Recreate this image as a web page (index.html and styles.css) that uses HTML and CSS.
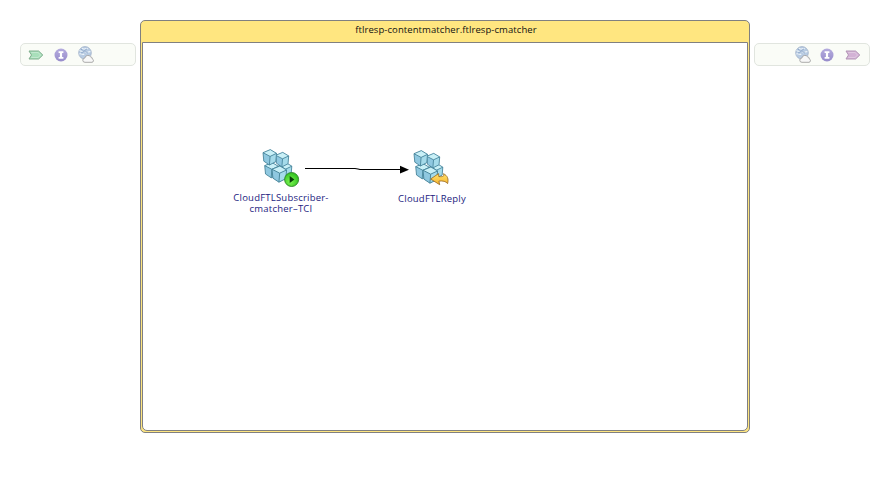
FILE: index.html
```
<!DOCTYPE html>
<html lang="en">
<head>
<meta charset="utf-8">
<title>ftlresp-cmatcher</title>
<link rel="stylesheet" href="styles.css">
</head>
<body>
<svg class="defs" width="0" height="0" aria-hidden="true">
  <defs>
    <linearGradient id="purple" x1="0" y1="0" x2="0" y2="1"><stop offset="0" stop-color="#b5acde"/><stop offset="1" stop-color="#978ccb"/></linearGradient>
    <radialGradient id="green" cx=".4" cy=".65" r=".65"><stop offset="0" stop-color="#7df552"/><stop offset="1" stop-color="#2fc01f"/></radialGradient>
    <linearGradient id="gold" x1="0" y1="0" x2="0" y2="1"><stop offset="0" stop-color="#ffe36c"/><stop offset="1" stop-color="#f8b32c"/></linearGradient>
    <symbol id="cube" viewBox="0.3 0.3 14.3 16.4" overflow="visible" preserveAspectRatio="none">
      <path d="M.7 3.8 8 .7l6.2 3.8-.7 8.4-6.4 3.4-5.6-3.9z" fill="#8fc8e0"/>
      <path d="M.7 3.8 8 .7l6.2 3.8-6.4 3.1z" fill="#c9f0f7"/>
      <path d="M7.8 7.6l6.4-3.1-.7 8.4-6.4 3.4z" fill="#a5dbea"/>
      <path d="M.7 3.8 8 .7l6.2 3.8-.7 8.4-6.4 3.4-5.6-3.9zM.7 3.8l7.1 3.8 6.4-3.1M7.8 7.6l-.7 8.7" fill="none" stroke="#417f96" stroke-width=".85" stroke-linejoin="round"/>
    </symbol>
    <symbol id="cubes" viewBox="0 0 38 38">
      <use href="#cube" x="16.5" y="13.2" width="13.7" height="15.5"/>
      <use href="#cube" x="13.3" y="3" width="13.8" height="15.3"/>
      <use href="#cube" x="2.3" y="13.2" width="14.5" height="16"/>
      <use href="#cube" x=".6" y=".2" width="14.3" height="16.2"/>
      <use href="#cube" x="9.6" y="16.6" width="15.4" height="17"/>
    </symbol>
    <symbol id="info" viewBox="0 0 14 14">
      <circle cx="7" cy="7" r="6.5" fill="url(#purple)"/>
      <path d="M4.6 3.3h4.8v1.7H8.1v4h1.3v1.7H4.6V9h1.3V5H4.6z" fill="#fff"/>
    </symbol>
    <symbol id="globe" viewBox="0 0 16 17">
      <circle cx="7" cy="6.9" r="6.3" fill="#b8cbe2" stroke="#9fb0c8" stroke-width=".8"/>
      <path d="M1.6 4.2c2 3 3.5-1 5.4 1.6s3.6-1.5 5.4.2M1.2 8.2c2-1.7 3 1.6 5-.2M4 2.2c2 2 3.5-.5 5.8.5" fill="none" stroke="#edf4fa" stroke-width="1.1"/>
      <path d="M3 3.2l3 2 3-2.5M3 7l3.4-1.7L10 7" fill="none" stroke="#7e9bc2" stroke-width=".7"/>
      <path d="M7 16.3a2.1 2.1 0 0 1-.2-4.2A3.2 3.2 0 0 1 12.6 10.8A2 2 0 0 1 14.3 13A1.7 1.7 0 0 1 14 16.3z" fill="#f8f8f8" stroke="#a2a2a2" stroke-width=".9"/>
    </symbol>
    <symbol id="tag" viewBox="0 0 16 10">
      <path d="M1 1h9.6L14.8 5l-4.2 4H1l2.5-4z" stroke-width="1"/>
      <path d="M3.2 2.5h6.8L12.6 5 10 7.5H3.2" fill="none" stroke="#fff" stroke-opacity=".3"/>
    </symbol>
  </defs>
</svg>
<main class="process">
  <aside class="rail rail-in">
    <svg class="tag tag-in"><use href="#tag"/></svg>
    <svg class="info"><use href="#info"/></svg>
    <svg class="globe"><use href="#globe"/></svg>
  </aside>
  <section class="frame">
    <h1 class="title">ftlresp-contentmatcher.ftlresp-cmatcher</h1>
    <div class="canvas">
      <svg class="link" viewBox="0 0 104 12">
        <path d="M0 5.5h50l3 .5 2 .5h40" fill="none" stroke="#000" stroke-width="1.2"/>
        <path d="M95 2.8l9 3.9-9 3.8z"/>
      </svg>
      <figure class="node subscriber">
        <svg class="node-icon" viewBox="0 0 38 38">
          <use href="#cubes" width="38" height="38"/>
          <circle cx="29.6" cy="30.5" r="7" fill="url(#green)" stroke="#2c8526" stroke-width=".9"/>
          <path d="M27.7 26.9v7.2l4.7-3.6z" fill="#063f08"/>
        </svg>
        <figcaption><span>CloudFTLSubscriber-</span><span>cmatcher–TCI</span></figcaption>
      </figure>
      <figure class="node reply">
        <svg class="node-icon" viewBox="0 0 38 38">
          <use href="#cubes" width="38" height="38"/>
          <path d="M17.6 29l8-5.4.2 3c4.3.3 5.8-.3 4.6-2.9 4.2 1.9 5.4 5.3 4.2 9.9-1.8-2.3-4.6-2.9-8.7-2.5l.8 3.6z" fill="url(#gold)" stroke="#94651c" stroke-width=".8" stroke-linejoin="round"/>
        </svg>
        <figcaption><span>CloudFTLReply</span></figcaption>
      </figure>
    </div>
  </section>
  <aside class="rail rail-out">
    <svg class="globe"><use href="#globe"/></svg>
    <svg class="info"><use href="#info"/></svg>
    <svg class="tag tag-out"><use href="#tag"/></svg>
  </aside>
</main>
</body>
</html>
```
FILE: styles.css
```
* { box-sizing: border-box; }
body {
  margin: 0;
  background: #fff;
  font-family: "Open Sans", "DejaVu Sans", sans-serif;
  font-size: 9.5px;
}
.defs { position: absolute; }
.process {
  display: grid;
  grid-template-columns: 116px 610px 116px;
  column-gap: 4px;
  align-items: start;
  padding: 20px 10px 0 20px;
  height: 480px;
}
.rail {
  display: flex;
  align-items: center;
  height: 23px;
  margin-top: 23px;
  border: 1px solid #e1e5df;
  border-radius: 5px;
  background: #fafcf7;
}
.rail svg { display: block; flex: none; }
.rail-in { padding: 0 0 0 7px; gap: 10px; }
.rail-in .info { margin-left: -0.5px; }
.rail-out { padding: 0 8px 0 0; gap: 10px; justify-content: flex-end; }
.rail-out .info { margin: 0 1px 0 -1px; }
.tag { width: 16px; height: 10px; }
.tag-in { fill: #a8dfba; stroke: #7fae8d; }
.tag-out { fill: #d3b2d5; stroke: #b396b6; }
.info { width: 14px; height: 14px; }
.globe { width: 16px; height: 17px; }
.frame {
  display: flex;
  flex-direction: column;
  height: 413px;
  padding: 0 1px 1px;
  border: 1px solid #808080;
  border-radius: 5px;
  background: #ffe680;
}
.title {
  margin: 0;
  height: 21px;
  padding: 1px 0 0 2px;
  font-size: 9.5px;
  font-weight: 400;
  line-height: 16px;
  letter-spacing: 0.08px;
  text-align: center;
  white-space: nowrap;
  color: #111;
}
.canvas {
  position: relative;
  flex: 1;
  border: 1px solid #808080;
  border-radius: 0 0 5px 5px;
  background: #fff;
}
.node {
  position: absolute;
  margin: 0;
  width: 120px;
  text-align: center;
  color: #1c1c80;
}
.subscriber { left: 78px; top: 106px; }
.reply { left: 229px; top: 107px; }
.node-icon { display: block; width: 38px; height: 38px; margin-left: 41px; }
.node figcaption {
  margin-top: 5px;
  line-height: 11px;
  letter-spacing: 0.22px;
  white-space: nowrap;
}
.node figcaption span { display: block; }
.link {
  position: absolute;
  left: 162px;
  top: 120px;
  width: 104px;
  height: 12px;
}
```
